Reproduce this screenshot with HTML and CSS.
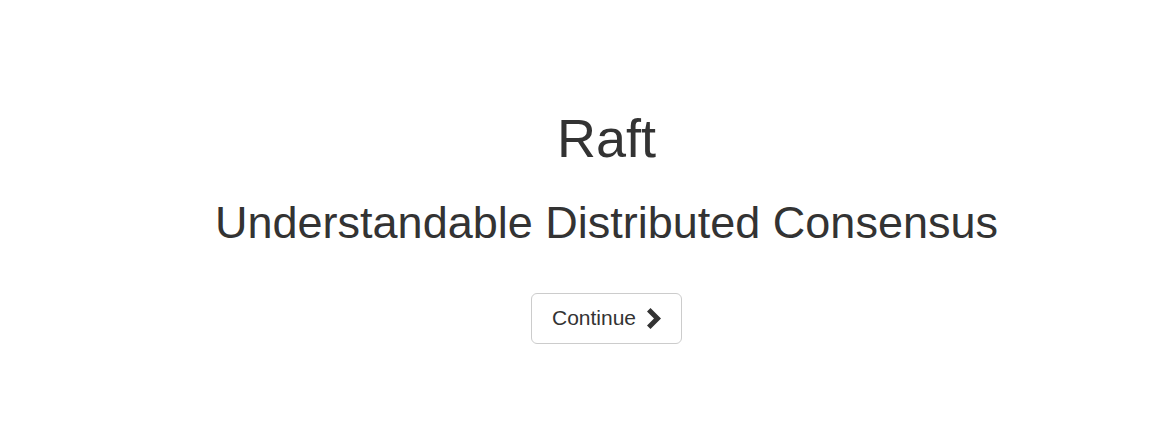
FILE: index.html
```html
<!DOCTYPE html>
<html lang="en">

<head>
    <meta charset="UTF-8">
    <meta name="viewport" content="width=device-width, initial-scale=1.0">
    <title>Raft</title>
    <link rel="stylesheet" href="styles.css">
</head>

<body>
    <div class="intro">
        <h1>Raft</h1>
        <h2>Understandable Distributed Consensus</h2>

        <div class="actions">
            <button class="btn">
                Continue
                <svg class="chevron" width="15" height="21" viewBox="0 0 15 21" aria-hidden="true">
                    <path d="M1 3.5 L4.5 0 L15 10.5 L4.5 21 L1 17.5 L8 10.5 Z" fill="#333"/>
                </svg>
            </button>
        </div>
    </div>
</body>

</html>
```

FILE: styles.css
```css
body {
    font-family: "Liberation Sans", Arial, sans-serif;
    color: #333;
    background-color: #fff;
    margin: 0;
}

.intro {
    display: flex;
    flex-direction: column;
    align-items: center;
    padding: 109px 0 0 39px;
    text-align: center;
}

.intro h1 {
    font-size: 54px;
    font-weight: 500;
    line-height: 1.1;
    margin: 0;
}

.intro h2 {
    font-size: 45px;
    font-weight: 500;
    line-height: 1.1;
    margin: 30px 0 0;
}

.actions {
    margin-top: 45px;
}

.btn {
    display: inline-flex;
    align-items: center;
    gap: 10px;
    height: 51px;
    padding: 0 20px;
    font-family: inherit;
    font-size: 21px;
    color: #333;
    background-color: #fff;
    border: 1px solid #ccc;
    border-radius: 6px;
    cursor: pointer;
}

.btn:hover {
    background-color: #e6e6e6;
    border-color: #adadad;
}

.chevron {
    display: block;
}
```
